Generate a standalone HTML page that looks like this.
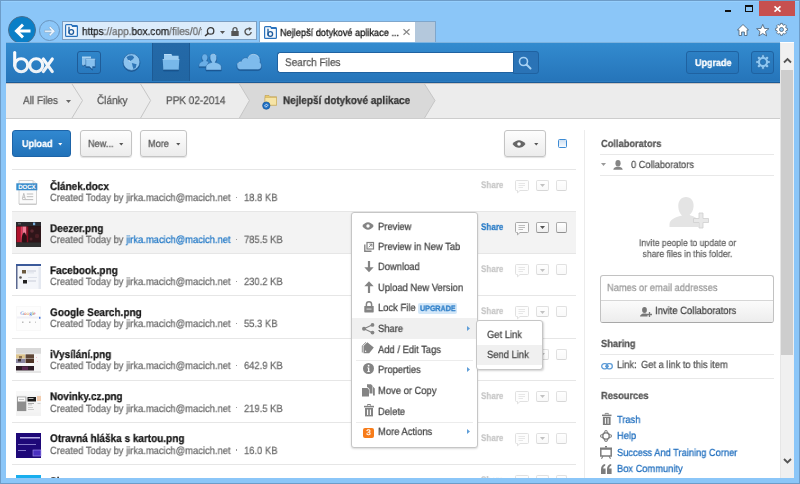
<!DOCTYPE html>
<html><head><meta charset="utf-8">
<style>
*{box-sizing:border-box;margin:0;padding:0}
html,body{width:800px;height:484px;overflow:hidden}
body{position:relative;background:#8bc6f8;font-family:"Liberation Sans",sans-serif;color:#333}
.a{position:absolute}
.t{position:absolute;white-space:nowrap;line-height:1;will-change:transform}
body{text-rendering:geometricPrecision}
.t{-webkit-text-stroke:0.25px currentColor}
svg{position:absolute;overflow:visible}
.btn{border:1px solid #c4c4c4;border-radius:3px;background:linear-gradient(#fdfdfd,#ececec);box-shadow:0 1px 1px rgba(0,0,0,0.12)}
</style></head><body>
<!-- window frame edges -->
<div class="a" style="left:0;top:0;width:800px;height:1px;background:#6d9cc8"></div>
<div class="a" style="left:1px;top:1px;width:798px;height:1px;background:#96cffd"></div>
<div class="a" style="left:0;top:0;width:1px;height:484px;background:#6d9cc8"></div>
<div class="a" style="left:799px;top:0;width:1px;height:484px;background:#6d9cc8"></div>
<div class="a" style="left:0;top:483px;width:800px;height:1px;background:#6d9cc8"></div>

<!-- window controls -->
<div class="a" style="left:725px;top:10px;width:6px;height:2px;background:#111"></div>
<div class="a" style="left:745px;top:5px;width:8px;height:7px;border:1px solid #111;border-top-width:2px"></div>
<div class="a" style="left:759px;top:1px;width:36px;height:15px;background:#c7504f"></div>
<svg style="left:774px;top:6px" width="7" height="6" viewBox="0 0 7 6"><path d="M0.5 0.3L6.5 5.7M6.5 0.3L0.5 5.7" stroke="#fff" stroke-width="1.6"/></svg>

<!-- right browser icons -->
<svg style="left:737px;top:24px" width="12" height="12" viewBox="0 0 12 12"><path d="M6 0.5L11.6 5.9H10V11.5H7.4V8H4.6V11.5H2V5.9H0.4z" fill="#fff" stroke="#4a5d70" stroke-width="0.8" stroke-linejoin="round"/></svg>
<svg style="left:755.5px;top:23.5px" width="13.5" height="12.5" viewBox="0 0 13.5 12.5"><path d="M6.75 0.4L8.5 4.4L12.9 4.7L9.5 7.5L10.6 11.9L6.75 9.5L2.9 11.9L4 7.5L0.6 4.7L5 4.4z" fill="#fff" stroke="#4a5d70" stroke-width="0.8" stroke-linejoin="round"/></svg>
<svg style="left:775px;top:23.3px" width="13" height="13" viewBox="0 0 13 13"><g transform="translate(6.5 6.5)"><path d="M-1.2 -6.1H1.2L1.5 -4.4L2.6 -3.9L4.1 -4.9L5.8 -3.2L4.8 -1.7L5.3 -0.6L7 -0.3V2.1L5.3 2.4L4.8 3.5L5.8 5L4.1 6.7L2.6 5.7L1.5 6.2L1.2 7.9H-1.2L-1.5 6.2L-2.6 5.7L-4.1 6.7L-5.8 5L-4.8 3.5L-5.3 2.4L-7 2.1V-0.3L-5.3 -0.6L-4.8 -1.7L-5.8 -3.2L-4.1 -4.9L-2.6 -3.9L-1.5 -4.4z" transform="translate(0 -0.9) scale(0.85)" fill="#fff" stroke="#4a5d70" stroke-width="0.9" stroke-linejoin="round"/><circle cx="0" cy="0" r="2" fill="#8fc8f8" stroke="#4a5d70" stroke-width="0.8"/></g></svg>

<!-- back / forward -->
<div class="a" style="left:8px;top:16px;width:28px;height:28px;border-radius:50%;background:#0a7fc7;border:1px solid #4a6f90"></div>
<svg style="left:14px;top:22.5px" width="17" height="16" viewBox="0 0 17 16"><path d="M16.5 8H3M9 1.6L2.4 8L9 14.4" stroke="#fff" stroke-width="2.9" fill="none" stroke-linejoin="miter"/></svg>
<div class="a" style="left:39px;top:20px;width:21px;height:21px;border-radius:50%;border:1px solid #6a94bd"></div>
<svg style="left:43.5px;top:25.5px" width="12" height="10.5" viewBox="0 0 12 10.5"><path d="M0.6 4.2H7.3L4.9 1.8L6.3 0.4L11.2 5.25L6.3 10.1L4.9 8.7L7.3 6.3H0.6z" fill="#eef6fe" stroke="#8aa8c4" stroke-width="0.6" stroke-linejoin="round"/></svg>

<!-- address bar -->
<div class="a" style="left:62px;top:21px;width:195px;height:19px;background:#dcecfb;border:1px solid #7b9ec2"></div>
<svg style="left:64.5px;top:24px" width="13" height="13" viewBox="0 0 13 13"><path d="M1.5 0.6H6.5L7.3 1.6H11.5Q12.4 1.6 12.4 2.5V11.5Q12.4 12.4 11.5 12.4H1.5Q0.6 12.4 0.6 11.5V1.5Q0.6 0.6 1.5 0.6z" fill="#f4f8fc" stroke="#2a72bd" stroke-width="1.2"/><path d="M6.5 0.6L7.3 1.6H12.4V3H7z" fill="#2a72bd"/><path d="M4 2.8V9.5" stroke="#1d5a9c" stroke-width="1.3"/><circle cx="6.3" cy="8" r="2.3" fill="none" stroke="#1d5a9c" stroke-width="1.3"/></svg>
<div class="t" style="left:81.5px;top:27.2px;font-size:11.10px;color:#1a1a1a;width:133px;overflow:hidden;transform:scaleX(0.9009);transform-origin:0 0"><span>https</span><span style="color:#6a6a6a">://app.</span><span>box.com</span><span style="color:#6a6a6a">/files/0/files</span></div>
<svg style="left:204px;top:27px" width="11" height="9.5" viewBox="0 0 11 9.5"><circle cx="6.6" cy="3.9" r="3.2" fill="none" stroke="#3a3a3a" stroke-width="1.3"/><path d="M4.4 6.2L1 9" stroke="#3a3a3a" stroke-width="1.6"/></svg>
<svg style="left:220px;top:31px" width="5" height="3" viewBox="0 0 5 3"><path d="M0 0H5L2.5 3z" fill="#555"/></svg>
<svg style="left:231px;top:26.5px" width="8" height="9" viewBox="0 0 8 9"><path d="M2 4V2.7A2 2 0 0 1 6 2.7V4" stroke="#555" stroke-width="1.3" fill="none"/><rect x="0.3" y="4" width="7.4" height="5" fill="#555"/></svg>
<svg style="left:243.5px;top:26.5px" width="8.5" height="9" viewBox="0 0 8.5 9"><path d="M7.2 5A3.1 3.1 0 1 1 5.6 2" stroke="#555" stroke-width="1.4" fill="none"/><path d="M4.6 0L8 1.6L5.3 4z" fill="#555"/></svg>

<!-- tab -->
<div class="a" style="left:259px;top:21px;width:157px;height:21px;background:#fff;border:1px solid #7fa6cb;border-bottom:none"></div>
<div class="a" style="left:415px;top:21px;width:21px;height:21px;background:#b4c8dc;border:1px solid #7fa6cb;border-bottom:none;border-left:none"></div>
<svg style="left:263.8px;top:25.5px" width="13" height="13" viewBox="0 0 13 13"><path d="M1.5 0.6H6.5L7.3 1.6H11.5Q12.4 1.6 12.4 2.5V11.5Q12.4 12.4 11.5 12.4H1.5Q0.6 12.4 0.6 11.5V1.5Q0.6 0.6 1.5 0.6z" fill="#f4f8fc" stroke="#2a72bd" stroke-width="1.2"/><path d="M6.5 0.6L7.3 1.6H12.4V3H7z" fill="#2a72bd"/><path d="M4 2.8V9.5" stroke="#1d5a9c" stroke-width="1.3"/><circle cx="6.3" cy="8" r="2.3" fill="none" stroke="#1d5a9c" stroke-width="1.3"/></svg>
<div class="t" style="left:279.8px;top:29px;font-size:10.21px;color:#111;transform:scaleX(0.9009);transform-origin:0 0">Nejlepší dotykové aplikace ...</div>
<svg style="left:403px;top:29px" width="7" height="6" viewBox="0 0 7 6"><path d="M0.5 0.3L6.5 5.7M6.5 0.3L0.5 5.7" stroke="#888" stroke-width="1.2"/></svg>

<!-- content viewport -->
<div class="a" id="vp" style="left:0;top:0;width:794px;height:478px;overflow:hidden">
<div class="a" style="left:6px;top:42px;width:788px;height:436px;background:#fff"></div>
<!-- HEADER -->
<div class="a" style="left:6px;top:42px;width:774px;height:41px;background:linear-gradient(#338bcf,#2574b9);border-top:1px solid #7db3e0;border-bottom:1px solid #1a5a96;box-shadow:inset 0 -1px 0 #2c7cc0"></div>
<!-- box logo -->
<svg style="left:12px;top:50px" width="44" height="25" viewBox="0 0 44 25">
 <defs><linearGradient id="lg" gradientUnits="userSpaceOnUse" x1="0" y1="0" x2="0" y2="25"><stop offset="0" stop-color="#ffffff"/><stop offset="1" stop-color="#e8eef4"/></linearGradient></defs>
 <g fill="none" stroke="url(#lg)" stroke-width="3.1">
  <path d="M2.7 2.6V15.5" stroke-linecap="round"/>
  <circle cx="9.2" cy="15.3" r="6.5"/>
  <circle cx="24.2" cy="15.3" r="6.5"/>
  <path d="M31.3 9L40.3 21.6M40.3 9L31.3 21.6" stroke-linecap="round"/>
 </g>
</svg>
<!-- nav icons -->
<svg style="left:0;top:0" width="0" height="0"><defs><filter id="ds" x="-20%" y="-20%" width="140%" height="150%"><feDropShadow dx="0" dy="0.9" stdDeviation="0.35" flood-color="#154a80" flood-opacity="0.85"/></filter></defs></svg>
<div class="a" style="left:77px;top:51px;width:24px;height:23px;border:1px solid #1f5c98;border-radius:3px"></div>
<svg style="left:81px;top:56px" width="16" height="14" viewBox="0 0 16 14"><g filter="url(#ds)">
 <path d="M1 0.7H10V8.8H3.2L1.8 10V8.8H1z" fill="#8cc2ec"/>
 <path d="M1 0.7H10V1.5H1z" fill="#c8e4f8"/>
 <path d="M4.8 2.8H14.2V10.5H11.6L11.4 13.2L8.4 10.5H4.8z" fill="#86c0ee" stroke="#2565a3" stroke-width="0.5"/>
 <path d="M4.8 2.8H14.2V3.5H4.8z" fill="#bfe0f8"/>
</g></svg>
<svg style="left:122px;top:53px" width="19" height="18" viewBox="0 0 19 18"><g filter="url(#ds)">
 <circle cx="9.5" cy="9" r="8.4" fill="#8cc3ee" stroke="#2363a0" stroke-width="0.7"/>
 <path d="M4.5 4.2C6 2.6 8.5 2.2 10.8 2.8L12.2 4.5L10.6 6.6L8.3 8L6.2 7.2z" fill="#2e74b6"/>
 <path d="M9.8 10L14.6 11.2L13.8 14.2L11.6 16.3L10.6 13.2z" fill="#2e74b6"/>
 <path d="M6.5 7.5L8.2 8.2" stroke="#e8f4fd" stroke-width="0.8"/>
</g></svg>
<div class="a" style="left:152px;top:43px;width:38px;height:38px;background:linear-gradient(#2469a8,#2166a3);box-shadow:inset 1px 0 0 #1d5a94,inset -1px 0 0 #1d5a94"></div>
<svg style="left:162px;top:53px" width="18" height="18" viewBox="0 0 18 18"><g filter="url(#ds)">
 <path d="M2 1H9.3L10.3 2.8H16.6V6.5H2z" fill="#9ccdf2"/>
 <path d="M2 1H9.3L9.6 1.6H2z" fill="#d4ecfb"/>
 <path d="M0.7 5.9H17.3L16.6 16.9H1.4z" fill="#78b8ea"/>
 <path d="M0.7 5.9H17.3L17.25 6.6H0.75z" fill="#b8dcf6"/>
 <path d="M1.4 16.9H16.6" stroke="#1f5e98" stroke-width="0.7"/>
</g></svg>
<svg style="left:198px;top:53px" width="24" height="18" viewBox="0 0 24 18"><g filter="url(#ds)">
 <path d="M6.8 1C8.6 1 9.8 2.6 9.7 4.6C9.6 6.2 9 7.3 8.4 7.9C9.5 8.2 10.3 8.6 10.8 9L8.5 13.6H1V12.2C1 10.5 2.6 9 5.3 8C4.6 7.4 4 6.2 3.9 4.6C3.8 2.6 5 1 6.8 1z" fill="#6aaee6" stroke="#2a6aa6" stroke-width="0.4"/>
 <path d="M15.3 1C17.4 1 18.8 2.8 18.7 5.1C18.6 7.1 17.8 8.5 17 9.3C20.8 10.4 23.3 11.6 23.3 13.8V17H8V13.8C8 11.6 10.5 10.4 14 9.3C13.2 8.5 12.2 7.1 12 5.1C11.8 2.8 13.2 1 15.3 1z" fill="#86c0ee" stroke="#2363a0" stroke-width="0.5"/>
 <path d="M12.5 3.2C13 1.8 14 1.2 15.3 1.2C16.6 1.2 17.6 1.8 18.1 3.2" stroke="#cfe8fa" stroke-width="0.6" fill="none"/>
</g></svg>
<svg style="left:236px;top:53px" width="26" height="18" viewBox="0 0 26 18"><g filter="url(#ds)">
 <path d="M4.5 16.6C2.2 16.6 1 15 1 12.8C1 10.5 2.8 8.8 5 8.8C5.6 6.3 7.5 4.7 9.8 4.7C10.6 4.7 11.2 4.9 11.8 5.2C12.8 2.6 14.8 1 17.5 1C21.5 1 24.2 4 24.2 7.8C24.2 8.4 24.1 9 24 9.5C25 10.3 25.5 11.4 25.5 12.8C25.5 15 24 16.6 21.8 16.6z" fill="#7ebbec" stroke="#2363a0" stroke-width="0.5"/>
 <path d="M12 5C13 2.6 15 1.3 17.5 1.3C20 1.3 22 2.8 23 4.6M1.5 11.5C2 9.8 3.3 9 5 9" stroke="#cfe8fa" stroke-width="0.6" fill="none"/>
</g></svg>
<!-- search -->
<div class="a" style="left:277px;top:52px;width:237px;height:21px;background:#fff;border-radius:3px 0 0 3px;border:1px solid #1f62a1;border-right:none"></div>
<div class="t" style="left:285px;top:58px;font-size:11.10px;color:#555;transform:scaleX(0.9009);transform-origin:0 0">Search Files</div>
<div class="a" style="left:513px;top:51px;width:26px;height:23px;background:#2a73b6;border:1px solid #1f62a1;border-radius:0 3px 3px 0"></div>
<svg style="left:518px;top:56px" width="14" height="14" viewBox="0 0 14 14">
 <circle cx="5.5" cy="5.5" r="4" fill="none" stroke="#a8d2f4" stroke-width="1.6"/>
 <path d="M8.5 8.5L12.5 12.5" stroke="#a8d2f4" stroke-width="2" stroke-linecap="round"/>
</svg>
<!-- upgrade -->
<div class="a" style="left:686px;top:51px;width:53px;height:23px;border:1px solid #1f62a1;border-radius:3px;background:rgba(30,95,160,0.15)"></div>
<div class="t" style="left:694.5px;top:59px;font-size:9.99px;font-weight:bold;color:#fff;transform:scaleX(0.9009);transform-origin:0 0">Upgrade</div>
<div class="a" style="left:751px;top:51px;width:23px;height:23px;border:1px solid #1f62a1;border-radius:3px;background:rgba(30,95,160,0.15)"></div>
<svg style="left:754.5px;top:54.2px" width="16" height="16" viewBox="0 0 16 16"><path d="M6.64 2.77 L6.58 0.84 L9.42 0.84 L9.36 2.77 L10.73 3.34 L12.06 1.93 L14.07 3.94 L12.66 5.27 L13.23 6.64 L15.16 6.58 L15.16 9.42 L13.23 9.36 L12.66 10.73 L14.07 12.06 L12.06 14.07 L10.73 12.66 L9.36 13.23 L9.42 15.16 L6.58 15.16 L6.64 13.23 L5.27 12.66 L3.94 14.07 L1.93 12.06 L3.34 10.73 L2.77 9.36 L0.84 9.42 L0.84 6.58 L2.77 6.64 L3.34 5.27 L1.93 3.94 L3.94 1.93 L5.27 3.34z M8 5.3A2.7 2.7 0 1 0 8 10.7A2.7 2.7 0 1 0 8 5.3z" fill="#8ec6f0" fill-rule="evenodd" stroke="#1f5f9c" stroke-width="0.5"/></svg>
<!-- BREADCRUMB -->
<svg style="left:6px;top:83px" width="774" height="36" viewBox="0 0 774 36">
 <rect x="0" y="0" width="774" height="36" fill="#ececec"/>
 <path d="M233.4 1H418.5L429 17.5L418.5 35H233.4L243.4 17.5z" fill="#d9d9d9"/>
 <g fill="none" stroke="#c6c6c6" stroke-width="1">
  <path d="M66 1L76.5 17.5L66 35"/>
  <path d="M134.6 1L144.6 17.5L134.6 35"/>
  <path d="M233.4 1L243.4 17.5L233.4 35"/>
  <path d="M418.5 1L429 17.5L418.5 35"/>
 </g>
 <rect x="0" y="0" width="774" height="1" fill="#cbc5c2"/>
 <rect x="0" y="35" width="774" height="1" fill="#cdcdcd"/>
</svg>
<div class="t" style="left:22.5px;top:96.2px;font-size:11.10px;color:#555;transform:scaleX(0.9009);transform-origin:0 0">All Files</div>
<svg style="left:65.5px;top:99.5px" width="5" height="3" viewBox="0 0 5 3"><path d="M0 0H5L2.5 3z" fill="#666"/></svg>
<div class="t" style="left:96.7px;top:96.2px;font-size:11.10px;color:#555;transform:scaleX(0.9009);transform-origin:0 0">Články</div>
<div class="t" style="left:166px;top:96.2px;font-size:11.10px;color:#555;transform:scaleX(0.9009);transform-origin:0 0">PPK 02-2014</div>
<svg style="left:262px;top:94px" width="16" height="16" viewBox="0 0 16 16">
 <path d="M3 1.5h4l1 1.2h6.5v8.5H3z" fill="#e9c96a" stroke="#b49342" stroke-width="0.5"/>
 <path d="M3 3.5h11.5v7.7H3z" fill="#f6e4a6" stroke="#c4a656" stroke-width="0.5"/>
 <circle cx="4.3" cy="11.6" r="3.7" fill="#1d6fc4" stroke="#0f4f92" stroke-width="0.6"/>
 <path d="M2.6 12.3c.3-1.5 1.5-2.2 2.8-1.9M6 10.9c-.3 1.5-1.5 2.2-2.8 1.9" stroke="#fff" stroke-width="0.8" fill="none"/>
</svg>
<div class="t" style="left:282.5px;top:96.2px;font-size:11.10px;font-weight:bold;color:#333;transform:scaleX(0.9009);transform-origin:0 0">Nejlepší dotykové aplikace</div>

<!-- TOOLBAR -->
<div class="a" style="left:12px;top:130px;width:59px;height:27px;border-radius:3px;background:linear-gradient(#3188d0,#2172b9);border:1px solid #1d64a8"></div>
<div class="t" style="left:21.8px;top:140px;font-size:9.99px;font-weight:bold;color:#fff;transform:scaleX(0.9009);transform-origin:0 0">Upload</div>
<svg style="left:58px;top:143px" width="4.5" height="2.5" viewBox="0 0 5 3"><path d="M0 0H5L2.5 3z" fill="#fff"/></svg>
<div class="a btn" style="left:80px;top:130px;width:52px;height:27px"></div>
<div class="t" style="left:87.5px;top:139.5px;font-size:10.21px;color:#555;transform:scaleX(0.9009);transform-origin:0 0">New...</div>
<svg style="left:118.7px;top:143.3px" width="4.5" height="2.5" viewBox="0 0 5 3"><path d="M0 0H5L2.5 3z" fill="#555"/></svg>
<div class="a btn" style="left:140px;top:130px;width:47px;height:27px"></div>
<div class="t" style="left:147.8px;top:139.5px;font-size:10.21px;color:#555;transform:scaleX(0.9009);transform-origin:0 0">More</div>
<svg style="left:176px;top:143.3px" width="4.5" height="2.5" viewBox="0 0 5 3"><path d="M0 0H5L2.5 3z" fill="#555"/></svg>
<div class="a btn" style="left:504px;top:130px;width:42px;height:27px"></div>
<svg style="left:512px;top:140px" width="14" height="8" viewBox="0 0 14 8"><path d="M0.5 4C2.5 1.3 4.8 0.2 7 0.2S11.5 1.3 13.5 4C11.5 6.7 9.2 7.8 7 7.8S2.5 6.7 0.5 4z" fill="#666"/><circle cx="7" cy="4" r="1.8" fill="#fff"/></svg>
<svg style="left:534px;top:143px" width="4.5" height="2.5" viewBox="0 0 5 3"><path d="M0 0H5L2.5 3z" fill="#555"/></svg>
<div class="a" style="left:558px;top:139px;width:9px;height:9px;border:1px solid #3d8bd4;border-radius:1.5px;background:linear-gradient(#cfe0f2,#f6fafe)"></div>
<div class="a" style="left:12px;top:169px;width:564px;height:1px;background:#e6e6e6"></div>
<div class="a" style="left:584px;top:130px;width:1px;height:348px;background:#ececec"></div>

<!-- ROWS -->
<svg style="left:16px;top:179.6px" width="22" height="25" viewBox="0 0 22 25">
 <path d="M3 0.5H17L20.5 4V24H3z" fill="#fbfbfb" stroke="#d2d2d2"/>
 <path d="M3 24.4H20.5" stroke="#bdbdbd" stroke-width="0.8"/>
 <path d="M17 0.5V4H20.5" fill="#eee" stroke="#d2d2d2"/>
 <rect x="0.3" y="3.3" width="21" height="7" fill="#3a8ccb"/>
 <text x="10.8" y="9.2" font-family="Liberation Sans" font-size="6.2" font-weight="bold" fill="#fff" text-anchor="middle" letter-spacing="-0.2">DOCX</text>
 <path d="M6.3 19L7.8 13.3L9.3 19M6.8 17.3H8.8" stroke="#aaa" stroke-width="0.7" fill="none"/>
 <path d="M10.8 14H17.2M10.8 16.7H17.2M6.3 19.6H17.2" stroke="#b5b5b5" stroke-width="0.9"/>
</svg>
<div class="t" style="left:49.5px;top:181.63px;font-size:11.10px;font-weight:bold;color:#151515;transform:scaleX(0.9009);transform-origin:0 0">Článek.docx</div>
<div class="t" style="left:49.5px;top:193.86px;font-size:10.43px;color:#6c6c6c;transform:scaleX(0.9009);transform-origin:0 0">Created Today by jirka.macich@macich.net</div>
<div class="a" style="left:235.8px;top:196.50px;width:1.3px;height:1.3px;background:#999"></div>
<div class="t" style="left:243.6px;top:193.86px;font-size:10.43px;color:#6c6c6c;transform:scaleX(0.9009);transform-origin:0 0">18.8 KB</div>
<div class="t" style="left:480.6px;top:180.96px;font-size:9.5px;font-weight:bold;color:#999;transform:scaleX(0.85);transform-origin:0 0;opacity:0.55;">Share</div>
<svg style="left:514.5px;top:180.0px;opacity:0.35;" width="14" height="13" viewBox="0 0 14 13"><path d="M1.5 0.5H12.5Q13.5 0.5 13.5 1.5V9.5Q13.5 10.5 12.5 10.5H5L2.5 12.8V10.5H1.5Q0.5 10.5 0.5 9.5V1.5Q0.5 0.5 1.5 0.5z" fill="#fafafa" stroke="#a0a0a0" stroke-width="0.9"/><path d="M3.5 3.5H10M3.5 5.5H10M3.5 7.5H8" stroke="#bdbdbd" stroke-width="1"/></svg>
<div class="a" style="left:536px;top:180.0px;width:13px;height:11px;border:1px solid #ababab;border-bottom:1.8px solid #8f8f8f;border-radius:2px;background:linear-gradient(#fff,#eee);opacity:0.35;"></div>
<svg style="left:540px;top:184.2px;opacity:0.35;" width="5" height="3" viewBox="0 0 5 3"><path d="M0 0H5L2.5 3z" fill="#555"/></svg>
<div class="a" style="left:556px;top:180.0px;width:11px;height:11px;border:1px solid #ababab;border-bottom:1.6px solid #8f8f8f;border-radius:2px;background:linear-gradient(#fff,#f0f0f0);opacity:0.35;"></div>
<div class="a" style="left:12px;top:211px;width:564px;height:1px;background:#e6e6e6"></div>
<div class="a" style="left:12px;top:212px;width:564px;height:41px;background:#f3f3f3"></div>
<svg style="left:16px;top:221.9px" width="25" height="25" viewBox="0 0 25 25">
 <rect width="25" height="25" fill="#1e1417"/>
 <rect width="25" height="4" fill="#2a2a2e"/>
 <rect x="2" y="1.2" width="3" height="1.2" fill="#6a6a70"/><rect x="17" y="0.6" width="2.2" height="2.6" fill="#7ab0e0"/>
 <rect x="0.5" y="4.5" width="4" height="16" fill="#b0122c"/>
 <rect x="4.5" y="4.5" width="2" height="16" fill="#e8385a"/>
 <rect x="6.5" y="4.5" width="4" height="9" fill="#f27a95"/>
 <rect x="10.5" y="4.5" width="2" height="16" fill="#8a0c20"/>
 <path d="M5.5 20.5C5.5 15 6.5 11 8.2 10.5C10 11 10.8 15 10.5 20.5z" fill="#2a1014"/>
 <rect x="12.5" y="4.5" width="12.5" height="16" fill="#2e1519"/>
 <circle cx="16" cy="9" r="1.8" fill="#5a2830"/><circle cx="21" cy="14" r="2.2" fill="#4a1e24"/><circle cx="15" cy="17" r="1.5" fill="#51242a"/>
 <rect x="0" y="20.5" width="25" height="4.5" fill="#303030"/>
</svg>
<div class="t" style="left:49.5px;top:223.77px;font-size:11.10px;font-weight:bold;color:#151515;transform:scaleX(0.9009);transform-origin:0 0">Deezer.png</div>
<div class="t" style="left:49.5px;top:236.00px;font-size:10.43px;color:#6c6c6c;transform:scaleX(0.9009);transform-origin:0 0">Created Today by <span style="color:#1f77c6">jirka.macich@macich.net</span></div>
<div class="a" style="left:235.8px;top:238.64px;width:1.3px;height:1.3px;background:#999"></div>
<div class="t" style="left:243.6px;top:236.00px;font-size:10.43px;color:#6c6c6c;transform:scaleX(0.9009);transform-origin:0 0">785.5 KB</div>
<div class="t" style="left:480.6px;top:223.10px;font-size:9.5px;font-weight:bold;color:#2a7cc7;transform:scaleX(0.85);transform-origin:0 0;">Share</div>
<svg style="left:514.5px;top:222.1px;" width="14" height="13" viewBox="0 0 14 13"><path d="M1.5 0.5H12.5Q13.5 0.5 13.5 1.5V9.5Q13.5 10.5 12.5 10.5H5L2.5 12.8V10.5H1.5Q0.5 10.5 0.5 9.5V1.5Q0.5 0.5 1.5 0.5z" fill="#fafafa" stroke="#a0a0a0" stroke-width="0.9"/><path d="M3.5 3.5H10M3.5 5.5H10M3.5 7.5H8" stroke="#bdbdbd" stroke-width="1"/></svg>
<div class="a" style="left:536px;top:222.1px;width:13px;height:11px;border:1px solid #ababab;border-bottom:1.8px solid #8f8f8f;border-radius:2px;background:linear-gradient(#fff,#eee);"></div>
<svg style="left:540px;top:226.3px;" width="5" height="3" viewBox="0 0 5 3"><path d="M0 0H5L2.5 3z" fill="#555"/></svg>
<div class="a" style="left:556px;top:222.1px;width:11px;height:11px;border:1px solid #ababab;border-bottom:1.6px solid #8f8f8f;border-radius:2px;background:linear-gradient(#fff,#f0f0f0);"></div>
<div class="a" style="left:12px;top:253px;width:564px;height:1px;background:#e6e6e6"></div>
<svg style="left:16px;top:264.1px" width="25" height="25" viewBox="0 0 25 25">
 <rect width="25" height="25" fill="#f4f6fa"/>
 <rect width="25" height="2" fill="#3b5a9a"/>
 <rect x="0" y="2" width="1.5" height="23" fill="#5a6890"/>
 <rect x="6" y="6" width="4" height="3.5" fill="#6a5a40"/>
 <rect x="11" y="6.5" width="9" height="1" fill="#c8ccd8"/><rect x="11" y="8.5" width="7" height="0.8" fill="#d8dce6"/>
 <circle cx="4.5" cy="13.5" r="1.3" fill="#555"/>
 <rect x="7" y="16" width="4" height="3.5" fill="#222"/>
 <rect x="12" y="16.5" width="8" height="1" fill="#c8ccd8"/><rect x="12" y="13" width="9" height="0.8" fill="#d8dce6"/>
 <rect x="22.5" y="3" width="2.5" height="22" fill="#e4e8f0"/>
</svg>
<div class="t" style="left:49.5px;top:265.92px;font-size:11.10px;font-weight:bold;color:#151515;transform:scaleX(0.9009);transform-origin:0 0">Facebook.png</div>
<div class="t" style="left:49.5px;top:278.14px;font-size:10.43px;color:#6c6c6c;transform:scaleX(0.9009);transform-origin:0 0">Created Today by jirka.macich@macich.net</div>
<div class="a" style="left:235.8px;top:280.78px;width:1.3px;height:1.3px;background:#999"></div>
<div class="t" style="left:243.6px;top:278.14px;font-size:10.43px;color:#6c6c6c;transform:scaleX(0.9009);transform-origin:0 0">230.2 KB</div>
<div class="t" style="left:480.6px;top:265.24px;font-size:9.5px;font-weight:bold;color:#999;transform:scaleX(0.85);transform-origin:0 0;opacity:0.55;">Share</div>
<svg style="left:514.5px;top:264.3px;opacity:0.35;" width="14" height="13" viewBox="0 0 14 13"><path d="M1.5 0.5H12.5Q13.5 0.5 13.5 1.5V9.5Q13.5 10.5 12.5 10.5H5L2.5 12.8V10.5H1.5Q0.5 10.5 0.5 9.5V1.5Q0.5 0.5 1.5 0.5z" fill="#fafafa" stroke="#a0a0a0" stroke-width="0.9"/><path d="M3.5 3.5H10M3.5 5.5H10M3.5 7.5H8" stroke="#bdbdbd" stroke-width="1"/></svg>
<div class="a" style="left:536px;top:264.3px;width:13px;height:11px;border:1px solid #ababab;border-bottom:1.8px solid #8f8f8f;border-radius:2px;background:linear-gradient(#fff,#eee);opacity:0.35;"></div>
<svg style="left:540px;top:268.5px;opacity:0.35;" width="5" height="3" viewBox="0 0 5 3"><path d="M0 0H5L2.5 3z" fill="#555"/></svg>
<div class="a" style="left:556px;top:264.3px;width:11px;height:11px;border:1px solid #ababab;border-bottom:1.6px solid #8f8f8f;border-radius:2px;background:linear-gradient(#fff,#f0f0f0);opacity:0.35;"></div>
<div class="a" style="left:12px;top:295px;width:564px;height:1px;background:#e6e6e6"></div>
<svg style="left:16px;top:306.2px" width="25" height="25" viewBox="0 0 25 25">
 <rect width="25" height="25" fill="#f8f8f8"/>
 <rect x="1" y="1" width="23" height="23" fill="#fdfdfd"/>
 <text x="12" y="8.6" font-family="Liberation Serif" font-size="5.2" text-anchor="middle"><tspan fill="#3a6ad0">G</tspan><tspan fill="#d03a3a">o</tspan><tspan fill="#e0b030">o</tspan><tspan fill="#3a6ad0">g</tspan><tspan fill="#30a050">l</tspan><tspan fill="#d03a3a">e</tspan></text>
 <rect x="1" y="10.5" width="23" height="2" fill="#f0f0f6"/>
 <rect x="23" y="10.8" width="1.5" height="2" fill="#4a7ae0"/>
 <rect x="6" y="15.5" width="1.5" height="1.5" fill="#bbb"/><rect x="13" y="15.5" width="1.5" height="1.5" fill="#bbb"/><rect x="19" y="15.5" width="1" height="1.5" fill="#ccc"/>
</svg>
<div class="t" style="left:49.5px;top:308.06px;font-size:11.10px;font-weight:bold;color:#151515;transform:scaleX(0.9009);transform-origin:0 0">Google Search.png</div>
<div class="t" style="left:49.5px;top:320.28px;font-size:10.43px;color:#6c6c6c;transform:scaleX(0.9009);transform-origin:0 0">Created Today by jirka.macich@macich.net</div>
<div class="a" style="left:235.8px;top:322.92px;width:1.3px;height:1.3px;background:#999"></div>
<div class="t" style="left:243.6px;top:320.28px;font-size:10.43px;color:#6c6c6c;transform:scaleX(0.9009);transform-origin:0 0">55.3 KB</div>
<div class="t" style="left:480.6px;top:307.38px;font-size:9.5px;font-weight:bold;color:#999;transform:scaleX(0.85);transform-origin:0 0;opacity:0.55;">Share</div>
<svg style="left:514.5px;top:306.4px;opacity:0.35;" width="14" height="13" viewBox="0 0 14 13"><path d="M1.5 0.5H12.5Q13.5 0.5 13.5 1.5V9.5Q13.5 10.5 12.5 10.5H5L2.5 12.8V10.5H1.5Q0.5 10.5 0.5 9.5V1.5Q0.5 0.5 1.5 0.5z" fill="#fafafa" stroke="#a0a0a0" stroke-width="0.9"/><path d="M3.5 3.5H10M3.5 5.5H10M3.5 7.5H8" stroke="#bdbdbd" stroke-width="1"/></svg>
<div class="a" style="left:536px;top:306.4px;width:13px;height:11px;border:1px solid #ababab;border-bottom:1.8px solid #8f8f8f;border-radius:2px;background:linear-gradient(#fff,#eee);opacity:0.35;"></div>
<svg style="left:540px;top:310.6px;opacity:0.35;" width="5" height="3" viewBox="0 0 5 3"><path d="M0 0H5L2.5 3z" fill="#555"/></svg>
<div class="a" style="left:556px;top:306.4px;width:11px;height:11px;border:1px solid #ababab;border-bottom:1.6px solid #8f8f8f;border-radius:2px;background:linear-gradient(#fff,#f0f0f0);opacity:0.35;"></div>
<div class="a" style="left:12px;top:338px;width:564px;height:1px;background:#e6e6e6"></div>
<svg style="left:16px;top:348.4px" width="25" height="25" viewBox="0 0 25 25">
 <rect width="25" height="25" fill="#f6f6f6"/>
 <rect width="25" height="5.7" fill="#d9d9d9"/>
 <rect x="0" y="6.3" width="9" height="4.2" fill="#dcc48e"/>
 <rect x="3" y="8" width="3" height="2.5" fill="#8a7050"/>
 <rect x="9.5" y="6.3" width="8.5" height="4.2" fill="#5e4636"/>
 <rect x="0" y="10.8" width="9" height="4.2" fill="#8a86a0"/>
 <rect x="2" y="11" width="3" height="2.5" fill="#3a3030"/>
 <rect x="9.5" y="10.8" width="8.5" height="4.2" fill="#4e3426"/>
 <rect x="0" y="18" width="18" height="4.5" fill="#2c1c26"/>
 <rect x="6" y="18.5" width="6" height="3.5" fill="#5a2a50"/>
 <rect x="20" y="9" width="1" height="1" fill="#f0c0d0"/><rect x="21" y="13" width="1" height="1" fill="#f0c0d0"/>
 <rect x="0" y="23" width="25" height="2" fill="#e6e6e6"/>
</svg>
<div class="t" style="left:49.5px;top:350.19px;font-size:11.10px;font-weight:bold;color:#151515;transform:scaleX(0.9009);transform-origin:0 0">iVysílání.png</div>
<div class="t" style="left:49.5px;top:362.42px;font-size:10.43px;color:#6c6c6c;transform:scaleX(0.9009);transform-origin:0 0">Created Today by jirka.macich@macich.net</div>
<div class="a" style="left:235.8px;top:365.06px;width:1.3px;height:1.3px;background:#999"></div>
<div class="t" style="left:243.6px;top:362.42px;font-size:10.43px;color:#6c6c6c;transform:scaleX(0.9009);transform-origin:0 0">642.9 KB</div>
<div class="t" style="left:480.6px;top:349.52px;font-size:9.5px;font-weight:bold;color:#999;transform:scaleX(0.85);transform-origin:0 0;opacity:0.55;">Share</div>
<svg style="left:514.5px;top:348.6px;opacity:0.35;" width="14" height="13" viewBox="0 0 14 13"><path d="M1.5 0.5H12.5Q13.5 0.5 13.5 1.5V9.5Q13.5 10.5 12.5 10.5H5L2.5 12.8V10.5H1.5Q0.5 10.5 0.5 9.5V1.5Q0.5 0.5 1.5 0.5z" fill="#fafafa" stroke="#a0a0a0" stroke-width="0.9"/><path d="M3.5 3.5H10M3.5 5.5H10M3.5 7.5H8" stroke="#bdbdbd" stroke-width="1"/></svg>
<div class="a" style="left:536px;top:348.6px;width:13px;height:11px;border:1px solid #ababab;border-bottom:1.8px solid #8f8f8f;border-radius:2px;background:linear-gradient(#fff,#eee);opacity:0.35;"></div>
<svg style="left:540px;top:352.8px;opacity:0.35;" width="5" height="3" viewBox="0 0 5 3"><path d="M0 0H5L2.5 3z" fill="#555"/></svg>
<div class="a" style="left:556px;top:348.6px;width:11px;height:11px;border:1px solid #ababab;border-bottom:1.6px solid #8f8f8f;border-radius:2px;background:linear-gradient(#fff,#f0f0f0);opacity:0.35;"></div>
<div class="a" style="left:12px;top:380px;width:564px;height:1px;background:#e6e6e6"></div>
<svg style="left:16px;top:390.5px" width="25" height="25" viewBox="0 0 25 25">
 <rect width="25" height="25" fill="#f4f4f4"/>
 <rect x="0" y="0" width="25" height="4" fill="#f8f8f8"/>
 <rect x="1" y="5.6" width="9.3" height="14.5" fill="#8e8e8e"/>
 <rect x="1.8" y="6.3" width="7.7" height="4.2" fill="#fafafa"/>
 <rect x="3" y="8" width="5" height="0.8" fill="#bbb"/>
 <rect x="11.5" y="6" width="8.5" height="4.5" fill="#1c1c1c"/>
 <rect x="12.5" y="7" width="5" height="0.8" fill="#ddd"/>
 <rect x="12" y="12" width="6" height="0.8" fill="#999"/><rect x="12" y="13.5" width="4" height="0.8" fill="#bbb"/>
 <rect x="12" y="16" width="5" height="0.8" fill="#c4c4c4"/><rect x="12" y="18" width="6" height="0.8" fill="#c4c4c4"/>
 <rect x="21" y="5" width="4" height="5" fill="#f2cdb0"/>
 <rect x="21.5" y="12" width="3" height="0.8" fill="#c8c8c8"/>
 <rect x="0" y="21.5" width="25" height="3.5" fill="#f2f2f2"/>
</svg>
<div class="t" style="left:49.5px;top:392.33px;font-size:11.10px;font-weight:bold;color:#151515;transform:scaleX(0.9009);transform-origin:0 0">Novinky.cz.png</div>
<div class="t" style="left:49.5px;top:404.56px;font-size:10.43px;color:#6c6c6c;transform:scaleX(0.9009);transform-origin:0 0">Created Today by jirka.macich@macich.net</div>
<div class="a" style="left:235.8px;top:407.20px;width:1.3px;height:1.3px;background:#999"></div>
<div class="t" style="left:243.6px;top:404.56px;font-size:10.43px;color:#6c6c6c;transform:scaleX(0.9009);transform-origin:0 0">219.5 KB</div>
<div class="t" style="left:480.6px;top:391.66px;font-size:9.5px;font-weight:bold;color:#999;transform:scaleX(0.85);transform-origin:0 0;opacity:0.55;">Share</div>
<svg style="left:514.5px;top:390.7px;opacity:0.35;" width="14" height="13" viewBox="0 0 14 13"><path d="M1.5 0.5H12.5Q13.5 0.5 13.5 1.5V9.5Q13.5 10.5 12.5 10.5H5L2.5 12.8V10.5H1.5Q0.5 10.5 0.5 9.5V1.5Q0.5 0.5 1.5 0.5z" fill="#fafafa" stroke="#a0a0a0" stroke-width="0.9"/><path d="M3.5 3.5H10M3.5 5.5H10M3.5 7.5H8" stroke="#bdbdbd" stroke-width="1"/></svg>
<div class="a" style="left:536px;top:390.7px;width:13px;height:11px;border:1px solid #ababab;border-bottom:1.8px solid #8f8f8f;border-radius:2px;background:linear-gradient(#fff,#eee);opacity:0.35;"></div>
<svg style="left:540px;top:394.9px;opacity:0.35;" width="5" height="3" viewBox="0 0 5 3"><path d="M0 0H5L2.5 3z" fill="#555"/></svg>
<div class="a" style="left:556px;top:390.7px;width:11px;height:11px;border:1px solid #ababab;border-bottom:1.6px solid #8f8f8f;border-radius:2px;background:linear-gradient(#fff,#f0f0f0);opacity:0.35;"></div>
<div class="a" style="left:12px;top:422px;width:564px;height:1px;background:#e6e6e6"></div>
<svg style="left:16px;top:432.6px" width="25" height="25" viewBox="0 0 25 25">
 <rect width="25" height="25" fill="#1e0878"/>
 <rect x="4" y="4" width="20" height="1.5" fill="#b8b0e8"/>
 <rect x="2" y="11" width="18" height="1" fill="#8478c8"/>
 <rect x="2" y="17" width="8" height="1" fill="#8478c8"/>
 <rect x="17" y="17" width="8" height="6" fill="#4a30c0" stroke="#a898f0" stroke-width="0.6"/>
</svg>
<div class="t" style="left:49.5px;top:434.48px;font-size:11.10px;font-weight:bold;color:#151515;transform:scaleX(0.9009);transform-origin:0 0">Otravná hláška s kartou.png</div>
<div class="t" style="left:49.5px;top:446.70px;font-size:10.43px;color:#6c6c6c;transform:scaleX(0.9009);transform-origin:0 0">Created Today by jirka.macich@macich.net</div>
<div class="a" style="left:235.8px;top:449.34px;width:1.3px;height:1.3px;background:#999"></div>
<div class="t" style="left:243.6px;top:446.70px;font-size:10.43px;color:#6c6c6c;transform:scaleX(0.9009);transform-origin:0 0">16.0 KB</div>
<div class="t" style="left:480.6px;top:433.80px;font-size:9.5px;font-weight:bold;color:#999;transform:scaleX(0.85);transform-origin:0 0;opacity:0.55;">Share</div>
<svg style="left:514.5px;top:432.8px;opacity:0.35;" width="14" height="13" viewBox="0 0 14 13"><path d="M1.5 0.5H12.5Q13.5 0.5 13.5 1.5V9.5Q13.5 10.5 12.5 10.5H5L2.5 12.8V10.5H1.5Q0.5 10.5 0.5 9.5V1.5Q0.5 0.5 1.5 0.5z" fill="#fafafa" stroke="#a0a0a0" stroke-width="0.9"/><path d="M3.5 3.5H10M3.5 5.5H10M3.5 7.5H8" stroke="#bdbdbd" stroke-width="1"/></svg>
<div class="a" style="left:536px;top:432.8px;width:13px;height:11px;border:1px solid #ababab;border-bottom:1.8px solid #8f8f8f;border-radius:2px;background:linear-gradient(#fff,#eee);opacity:0.35;"></div>
<svg style="left:540px;top:437.0px;opacity:0.35;" width="5" height="3" viewBox="0 0 5 3"><path d="M0 0H5L2.5 3z" fill="#555"/></svg>
<div class="a" style="left:556px;top:432.8px;width:11px;height:11px;border:1px solid #ababab;border-bottom:1.6px solid #8f8f8f;border-radius:2px;background:linear-gradient(#fff,#f0f0f0);opacity:0.35;"></div>
<div class="a" style="left:12px;top:464px;width:564px;height:1px;background:#e6e6e6"></div>
<svg style="left:16px;top:474.8px" width="25" height="25" viewBox="0 0 25 25">
 <rect width="25" height="25" fill="#18aeee"/>
</svg>
<div class="t" style="left:49.5px;top:476.62px;font-size:11.10px;font-weight:bold;color:#151515;transform:scaleX(0.9009);transform-origin:0 0">Skype.png</div>
<div class="t" style="left:49.5px;top:488.84px;font-size:10.43px;color:#6c6c6c;transform:scaleX(0.9009);transform-origin:0 0">Created Today by jirka.macich@macich.net</div>
<div class="a" style="left:235.8px;top:491.48px;width:1.3px;height:1.3px;background:#999"></div>
<div class="t" style="left:243.6px;top:488.84px;font-size:10.43px;color:#6c6c6c;transform:scaleX(0.9009);transform-origin:0 0">102.4 KB</div>
<div class="t" style="left:480.6px;top:475.94px;font-size:9.5px;font-weight:bold;color:#999;transform:scaleX(0.85);transform-origin:0 0;opacity:0.55;">Share</div>
<svg style="left:514.5px;top:475.0px;opacity:0.35;" width="14" height="13" viewBox="0 0 14 13"><path d="M1.5 0.5H12.5Q13.5 0.5 13.5 1.5V9.5Q13.5 10.5 12.5 10.5H5L2.5 12.8V10.5H1.5Q0.5 10.5 0.5 9.5V1.5Q0.5 0.5 1.5 0.5z" fill="#fafafa" stroke="#a0a0a0" stroke-width="0.9"/><path d="M3.5 3.5H10M3.5 5.5H10M3.5 7.5H8" stroke="#bdbdbd" stroke-width="1"/></svg>
<div class="a" style="left:536px;top:475.0px;width:13px;height:11px;border:1px solid #ababab;border-bottom:1.8px solid #8f8f8f;border-radius:2px;background:linear-gradient(#fff,#eee);opacity:0.35;"></div>
<svg style="left:540px;top:479.2px;opacity:0.35;" width="5" height="3" viewBox="0 0 5 3"><path d="M0 0H5L2.5 3z" fill="#555"/></svg>
<div class="a" style="left:556px;top:475.0px;width:11px;height:11px;border:1px solid #ababab;border-bottom:1.6px solid #8f8f8f;border-radius:2px;background:linear-gradient(#fff,#f0f0f0);opacity:0.35;"></div>
<!-- /ROWS -->
<!-- MENU -->
<div class="a" style="left:351px;top:212px;width:127px;height:236px;background:#fff;border:1px solid #c6c6c6;border-radius:3px;box-shadow:0 1px 2px rgba(0,0,0,0.15)"></div>
<div class="a" style="left:352px;top:318px;width:125px;height:21px;background:#f0f0f0"></div>
<div class="a" style="left:356px;top:360px;width:117px;height:1px;background:#ececec"></div>
<div class="a" style="left:356px;top:422px;width:117px;height:1px;background:#ececec"></div>
<div class="t" style="left:378px;top:222.74px;font-size:10.43px;color:#444;transform:scaleX(0.9009);transform-origin:0 0">Preview</div>
<div class="t" style="left:378px;top:243.04px;font-size:10.43px;color:#444;transform:scaleX(0.9009);transform-origin:0 0">Preview in New Tab</div>
<div class="t" style="left:378px;top:263.14px;font-size:10.43px;color:#444;transform:scaleX(0.9009);transform-origin:0 0">Download</div>
<div class="t" style="left:378px;top:283.79px;font-size:10.43px;color:#444;transform:scaleX(0.9009);transform-origin:0 0">Upload New Version</div>
<div class="t" style="left:378px;top:304.44px;font-size:10.43px;color:#444;transform:scaleX(0.9009);transform-origin:0 0">Lock File</div>
<div class="t" style="left:378px;top:325.44px;font-size:10.43px;color:#444;transform:scaleX(0.9009);transform-origin:0 0">Share</div>
<div class="t" style="left:378px;top:345.94px;font-size:10.43px;color:#444;transform:scaleX(0.9009);transform-origin:0 0">Add / Edit Tags</div>
<div class="t" style="left:378px;top:366.34px;font-size:10.43px;color:#444;transform:scaleX(0.9009);transform-origin:0 0">Properties</div>
<div class="t" style="left:378px;top:387.19px;font-size:10.43px;color:#444;transform:scaleX(0.9009);transform-origin:0 0">Move or Copy</div>
<div class="t" style="left:378px;top:407.64px;font-size:10.43px;color:#444;transform:scaleX(0.9009);transform-origin:0 0">Delete</div>
<div class="t" style="left:378px;top:428.44px;font-size:10.43px;color:#444;transform:scaleX(0.9009);transform-origin:0 0">More Actions</div>
<div class="a" style="left:417.8px;top:303.2px;width:39px;height:10.5px;background:#d3e7f8;border-radius:2px"></div>
<div class="t" style="left:420.3px;top:305.49px;font-size:7.88px;font-weight:bold;color:#2a7cc7;transform:scaleX(0.9009);transform-origin:0 0">UPGRADE</div>

<svg style="left:362px;top:222px" width="12" height="8" viewBox="0 0 12 8"><path d="M0.3 4C2 1.4 4 0.2 6 0.2S10 1.4 11.7 4C10 6.6 8 7.8 6 7.8S2 6.6 0.3 4z" fill="#848484"/><circle cx="6" cy="4" r="1.7" fill="#fff"/></svg>
<svg style="left:363.5px;top:241.5px" width="10" height="10" viewBox="0 0 10 10"><path d="M0.8 2.5V9.2H7.5" stroke="#848484" stroke-width="1.4" fill="none"/><rect x="3" y="0.5" width="6.5" height="6.5" fill="none" stroke="#848484" stroke-width="1.2"/><path d="M4.8 5.3L7.8 2.3M5.5 2.2H7.9V4.6" stroke="#848484" stroke-width="1" fill="none"/></svg>
<svg style="left:363.5px;top:260.8px" width="10" height="11.5" viewBox="0 0 10 11.5"><path d="M5 0V7" stroke="#848484" stroke-width="2.2"/><path d="M0.3 6.2H9.7L5 11.3z" fill="#848484"/></svg>
<svg style="left:363.5px;top:281.3px" width="10" height="12" viewBox="0 0 10 12"><path d="M5 4.5V12" stroke="#848484" stroke-width="2.2"/><path d="M0.3 5.3H9.7L5 0.2z" fill="#848484"/></svg>
<svg style="left:363.8px;top:301.2px" width="10" height="11.5" viewBox="0 0 10 11.5"><path d="M2.4 5V3.3A2.6 2.6 0 0 1 7.6 3.3V5" stroke="#848484" stroke-width="1.5" fill="none"/><rect x="0.3" y="5" width="9.4" height="6.4" rx="0.6" fill="#848484"/><rect x="2.5" y="7.5" width="5" height="1.2" fill="#ccc"/></svg>
<svg style="left:361.7px;top:323px" width="12.5" height="11.5" viewBox="0 0 12.5 11.5"><path d="M10.5 1.8L2 5.8L10.5 9.7" stroke="#848484" stroke-width="1.1" fill="none"/><circle cx="10.5" cy="1.9" r="1.9" fill="#848484"/><circle cx="2" cy="5.8" r="2" fill="#848484"/><circle cx="10.5" cy="9.6" r="1.9" fill="#848484"/></svg>
<svg style="left:362px;top:342.2px" width="12" height="11.5" viewBox="0 0 12 11.5"><path d="M5.3 0.3L11.8 5.5L7.2 11.3L1.5 11.3L1.5 4z" fill="#848484"/><path d="M4 0.3L0.3 3.8V10.5" stroke="#848484" stroke-width="0.9" fill="none"/><circle cx="3.6" cy="9.3" r="0.7" fill="#fff"/></svg>
<svg style="left:363px;top:363.2px" width="11" height="11" viewBox="0 0 11 11"><circle cx="5.5" cy="5.5" r="5.5" fill="#848484"/><circle cx="5.6" cy="2.7" r="0.9" fill="#fff"/><path d="M4.2 4.6H6.3V8.2H7V8.9H4.2V8.2H5V5.3H4.2z" fill="#fff"/></svg>
<svg style="left:361.7px;top:383.7px" width="13" height="12.5" viewBox="0 0 13 12.5"><path d="M0 4H5.5L7 5.5V12.5H0z" fill="#848484"/><path d="M5 0.3H9L10.5 1.8V9.5H7.5V5L5.8 3.3H5z" fill="#848484"/><path d="M9.8 1.5L12.8 4.5V11.5H11V3z" fill="#848484"/></svg>
<svg style="left:363.6px;top:403.6px" width="10" height="12.5" viewBox="0 0 10 12.5"><path d="M3.5 1.6V0.5H6.5V1.6" stroke="#848484" stroke-width="1" fill="none"/><rect x="0" y="1.8" width="10" height="1.6" fill="#848484"/><path d="M1 4H9V12.4H1z" fill="#848484"/><path d="M3.6 5.5V11M6.4 5.5V11" stroke="#fff" stroke-width="1.1"/></svg>
<div class="a" style="left:363px;top:427.8px;width:11px;height:10.6px;background:#f77c1a;border-radius:2px"></div>
<div class="t" style="left:363px;top:428.3px;width:11px;text-align:center;font-size:8px;line-height:10px;color:#fff;noscale:1">3</div>

<svg style="left:467px;top:325.7px" width="3" height="5" viewBox="0 0 3 5"><path d="M0 0L3 2.5L0 5z" fill="#5f9ed8"/></svg>
<svg style="left:467px;top:366.7px" width="3" height="5" viewBox="0 0 3 5"><path d="M0 0L3 2.5L0 5z" fill="#5f9ed8"/></svg>
<svg style="left:467px;top:428.5px" width="3" height="5" viewBox="0 0 3 5"><path d="M0 0L3 2.5L0 5z" fill="#5f9ed8"/></svg>
<div class="a" style="left:476px;top:320px;width:67px;height:50px;background:#fff;border:1px solid #c6c6c6;border-radius:3px;box-shadow:1px 1px 2px rgba(0,0,0,0.18)"></div>
<div class="a" style="left:477px;top:345px;width:65px;height:20px;background:#f0f0f0"></div>
<div class="t" style="left:487px;top:330.74px;font-size:10.43px;color:#444;transform:scaleX(0.9009);transform-origin:0 0">Get Link</div>
<div class="t" style="left:487px;top:350.94px;font-size:10.43px;color:#444;transform:scaleX(0.9009);transform-origin:0 0">Send Link</div>
<!-- /MENU -->
<!-- PANEL -->
<div class="t" style="left:600.5px;top:140.13px;font-size:10.32px;font-weight:bold;color:#555;;transform:scaleX(0.9009);transform-origin:0 0">Collaborators</div>
<div class="a" style="left:600px;top:154px;width:174px;height:1px;background:#e8e8e8"></div>
<svg style="left:601px;top:163px" width="5" height="3" viewBox="0 0 5 3"><path d="M0 0H5L2.5 3z" fill="#999"/></svg>
<svg style="left:612.5px;top:160px" width="10" height="10" viewBox="0 0 10 10"><ellipse cx="5" cy="3.3" rx="2.6" ry="3.2" fill="#858585"/><path d="M0.3 9.8C0.3 8 2 7.2 3.5 6.7H6.5C8 7.2 9.7 8 9.7 9.8z" fill="#858585"/></svg>
<div class="t" style="left:630.5px;top:161.13px;font-size:10.32px;color:#555;;transform:scaleX(0.9009);transform-origin:0 0">0 Collaborators</div>
<div class="a" style="left:600px;top:175px;width:174px;height:1px;background:#e8e8e8"></div>
<svg style="left:669px;top:196px" width="41" height="35" viewBox="0 0 41 35">
 <path d="M17 1C22 1 25 5 24.6 10.5C24.3 14.5 22.5 17.5 20.5 19C26 20.5 29 22.5 29.5 25V31H0.5V28C0.8 24 5 21.5 13 19.5C11 18 9.5 15 9.3 10.8C9 5 12 1 17 1z" fill="#e4e4e4"/>
 <path d="M30 17H34V22.5H39.5V26.5H34V32H30V26.5H24.5V22.5H30z" fill="#e8e8e8" stroke="#cfcfcf" stroke-width="0.8"/>
</svg>
<div class="t" style="left:605px;width:165px;text-align:center;top:238.62px;font-size:9.55px;color:#666;transform:scaleX(0.9009);transform-origin:82.5px 0">Invite people to update or</div>
<div class="t" style="left:605px;width:165px;text-align:center;top:249.97px;font-size:9.55px;color:#666;transform:scaleX(0.9009);transform-origin:82.5px 0">share files in this folder.</div>
<div class="a" style="left:600px;top:275px;width:174px;height:48px;border:1px solid #c2c2c2;border-bottom-color:#a8a8a8;border-radius:3px;background:#fff;overflow:hidden"><div class="a" style="left:0;top:24px;width:172px;height:23px;background:linear-gradient(#fbfbfb,#ececec);border-top:1px solid #d6d6d6"></div></div>
<div class="t" style="left:607px;top:283.63px;font-size:10.32px;color:#9a9a9a;;transform:scaleX(0.9009);transform-origin:0 0">Names or email addresses</div>
<svg style="left:639.5px;top:306.5px" width="12" height="10" viewBox="0 0 12 10"><ellipse cx="4.5" cy="3" rx="2.4" ry="3" fill="#777"/><path d="M0 9.5C0 8 1.5 7 3 6.5H6C7 6.8 7.5 7.2 7.5 7.5V9.5z" fill="#777"/><path d="M9.5 5V10M7 7.5H12" stroke="#777" stroke-width="1.3"/></svg>
<div class="t" style="left:654.6px;top:306.70px;font-size:10.49px;color:#444;;transform:scaleX(0.9009);transform-origin:0 0">Invite Collaborators</div>
<div class="t" style="left:601px;top:340.23px;font-size:10.32px;font-weight:bold;color:#555;;transform:scaleX(0.9009);transform-origin:0 0">Sharing</div>
<div class="a" style="left:600px;top:354px;width:174px;height:1px;background:#e8e8e8"></div>
<svg style="left:601px;top:362.5px" width="12" height="6.5" viewBox="0 0 12 6.5"><rect x="0.7" y="0.7" width="6" height="5.1" rx="2.5" fill="none" stroke="#5d9bd6" stroke-width="1.3"/><rect x="5.3" y="0.7" width="6" height="5.1" rx="2.5" fill="none" stroke="#5d9bd6" stroke-width="1.3"/><path d="M4 3.25H8" stroke="#5d9bd6" stroke-width="1.2"/></svg>
<div class="t" style="left:617px;top:361.03px;font-size:10.32px;color:#555;;transform:scaleX(0.9009);transform-origin:0 0">Link:</div>
<div class="t" style="left:640.6px;top:361.03px;font-size:10.32px;color:#555;;transform:scaleX(0.9009);transform-origin:0 0">Get a link to this item</div>
<div class="a" style="left:600px;top:378px;width:174px;height:1px;background:#e8e8e8"></div>
<div class="t" style="left:601px;top:392.23px;font-size:10.32px;font-weight:bold;color:#555;;transform:scaleX(0.9009);transform-origin:0 0">Resources</div>
<div class="t" style="left:616.8px;top:415.93px;font-size:10.32px;color:#1c6cbd;;transform:scaleX(0.9009);transform-origin:0 0">Trash</div>
<div class="t" style="left:616.8px;top:432.03px;font-size:10.32px;color:#1c6cbd;;transform:scaleX(0.9009);transform-origin:0 0">Help</div>
<div class="t" style="left:616.8px;top:448.63px;font-size:10.32px;color:#1c6cbd;;transform:scaleX(0.9009);transform-origin:0 0">Success And Training Corner</div>
<div class="t" style="left:616.8px;top:464.63px;font-size:10.32px;color:#1c6cbd;;transform:scaleX(0.9009);transform-origin:0 0">Box Community</div>
<svg style="left:601.6px;top:413.4px" width="9.5" height="12" viewBox="0 0 9.5 12"><path d="M3.2 1.5V0.4H6.3V1.5" stroke="#7d7d7d" stroke-width="0.9" fill="none"/><rect x="0" y="1.6" width="9.5" height="1.5" fill="#7d7d7d"/><path d="M0.9 3.8H8.6V12H0.9z" fill="#7d7d7d"/><path d="M3.4 5V10.8M6.1 5V10.8" stroke="#fff" stroke-width="1"/></svg>
<svg style="left:600.2px;top:429.8px" width="12" height="12" viewBox="0 0 12 12"><g fill="#7d7d7d"><circle cx="6" cy="6" r="4.3"/><circle cx="6" cy="1.7" r="1.7"/><circle cx="6" cy="10.3" r="1.7"/><circle cx="1.7" cy="6" r="1.7"/><circle cx="10.3" cy="6" r="1.7"/></g><circle cx="6" cy="6" r="2.5" fill="#fff"/><g fill="#fff"><circle cx="6" cy="1.7" r="0.7"/><circle cx="6" cy="10.3" r="0.7"/><circle cx="1.7" cy="6" r="0.7"/><circle cx="10.3" cy="6" r="0.7"/></g></svg>
<svg style="left:600.2px;top:446.1px" width="12" height="13" viewBox="0 0 12 13"><rect x="5" y="0" width="2" height="1.5" fill="#7d7d7d"/><rect x="0" y="1.5" width="12" height="1.6" fill="#7d7d7d"/><rect x="0.8" y="3" width="10.4" height="7" fill="none" stroke="#7d7d7d" stroke-width="1.5"/><path d="M3 10L1.5 12.7M9 10L10.5 12.7" stroke="#7d7d7d" stroke-width="1.1"/></svg>
<svg style="left:601px;top:464px" width="11" height="10" viewBox="0 0 11 10"><path d="M0 10V5.2C0 2.2 1.5 0.5 4.2 0V1.8C2.8 2.3 2.2 3.3 2.2 4.6H4.6V10z" fill="#7d7d7d"/><path d="M6 10V5.2C6 2.2 7.5 0.5 10.2 0V1.8C8.8 2.3 8.2 3.3 8.2 4.6H10.6V10z" fill="#7d7d7d"/></svg>
<!-- /PANEL -->
<!-- scrollbar -->
<div class="a" style="left:780px;top:43px;width:14px;height:435px;background:#f0f0f0;border-left:1px solid #e6e6e6"></div>
<div class="a" style="left:781px;top:70px;width:12px;height:285px;background:#cdcdcd"></div>
<svg style="left:782.5px;top:55.5px" width="10" height="8" viewBox="0 0 10 8"><path d="M1 6.5L4.5 3L8 6.5" stroke="#555" stroke-width="1.8" fill="none"/></svg>
<svg style="left:782.5px;top:456.5px" width="10" height="8" viewBox="0 0 10 8"><path d="M1 2L4.5 5.5L8 2" stroke="#555" stroke-width="1.8" fill="none"/></svg>
</div>

</body></html>
